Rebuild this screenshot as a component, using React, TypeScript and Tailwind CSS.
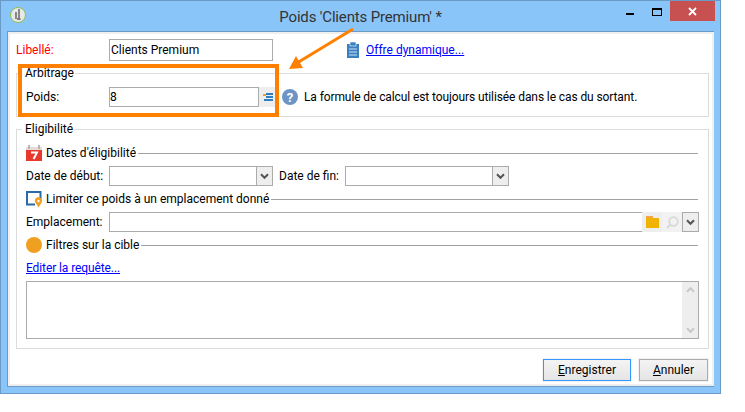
import React from "react";

const Chevron = ({ color = "#555" }: { color?: string }) => (
  <svg width="9" height="7" viewBox="0 0 9 7">
    <path d="M1 1.2 L4.5 4.8 L8 1.2" fill="none" stroke={color} strokeWidth="2" />
  </svg>
);

const SelectBox = ({ width }: { width: string }) => (
  <div className={`flex h-[20px] border border-[#ababab] bg-white box-border ${width}`}>
    <div className="flex-1" />
    <div className="flex w-[16px] items-center justify-center border-l border-[#ababab] bg-[#eeeeee]">
      <Chevron />
    </div>
  </div>
);

const SectionRow = ({ icon, text }: { icon: React.ReactNode; text: string }) => (
  <div className="flex h-[16px] items-center">
    <div className="flex w-[20px] shrink-0">{icon}</div>
    <span className="whitespace-nowrap leading-[14px]">{text}</span>
    <div className="ml-[2px] mr-px h-0 flex-1 border-t border-[#a0a0a0]" />
  </div>
);

const Calendar = () => (
  <svg width="16" height="16" viewBox="0 0 16 16">
    <rect x="0" y="3" width="16" height="13" fill="#e8392c" />
    <rect x="0" y="2" width="16" height="3" fill="#e4dcd8" />
    <rect x="2" y="0" width="2" height="4" fill="#bcb4b0" />
    <rect x="12" y="0" width="2" height="4" fill="#bcb4b0" />
    <path d="M5 7.5 H11 L7.6 14" fill="none" stroke="#ffffff" strokeWidth="2" />
  </svg>
);

const Location = () => (
  <svg width="16" height="17" viewBox="0 0 16 17">
    <path d="M9 13.5 H1 V1 H14.5 V8" fill="none" stroke="#2a6aa8" strokeWidth="2" />
    <path d="M12.5 16.5 L9.4 11.5 A3.6 3.6 0 1 1 15.6 11.5 Z" fill="#f0a020" />
    <circle cx="12.5" cy="10" r="1.2" fill="#ffffff" />
  </svg>
);

const Clipboard = () => (
  <svg width="12" height="16" viewBox="0 0 12 16">
    <rect x="0" y="2" width="12" height="14" fill="#3a80c0" />
    <rect x="3" y="0" width="6" height="4" fill="#3a80c0" stroke="#ffffff" strokeWidth="0.6" />
    <path d="M2 7 H10 M2 10 H10 M2 13 H10" stroke="#cfe2f3" strokeWidth="1.2" />
  </svg>
);

const FormulaIcon = () => (
  <svg width="10" height="8" viewBox="0 0 10 8">
    <rect x="0" y="1" width="3" height="2" fill="#f39c1f" />
    <rect x="3" y="0" width="7" height="2" fill="#2e7fc1" />
    <rect x="3" y="3" width="7" height="2" fill="#2e7fc1" />
    <rect x="1" y="6" width="9" height="2" fill="#2e7fc1" />
  </svg>
);

export default function App() {
  return (
    <div
      className="relative h-[412px] w-[745px] overflow-hidden bg-white text-[12px] text-black"
      style={{ fontFamily: 'Roboto, "Noto Sans", sans-serif' }}
    >
      <div className="flex h-[394px] w-[721px] flex-col border border-[#6a9ac8] bg-[#8ac5fa] box-border">
        <div className="grid h-[30px] shrink-0 grid-cols-[1fr_auto_1fr] items-start">
          <div className="ml-[9px] mt-[6px] flex h-[16px] w-[16px] items-center justify-center rounded-full border border-[#8fbf50] bg-[#e8e8e8]">
            <svg width="8" height="12" viewBox="0 0 8 12">
              <path d="M5 0 V9 M2 3 V10 M6.5 10 H3" stroke="#555" strokeWidth="1.3" fill="none" />
            </svg>
          </div>
          <div className="mt-[6px] whitespace-nowrap text-center text-[15px] leading-[20px] tracking-[-0.16px] text-[#333333]">
            Poids 'Clients Premium' *
          </div>
          <div className="mr-[5px] flex items-start justify-end">
            <div className="mr-[18px] mt-[12px] h-[2px] w-[8px] bg-black" />
            <div className="mr-[8px] mt-[7px] h-[8px] w-[10px] border border-t-2 border-black" />
            <div className="flex h-[20px] w-[45px] items-center justify-center bg-[#c75050]">
              <svg width="9" height="9" viewBox="0 0 9 9">
                <path d="M1 1 L8 8 M8 1 L1 8" stroke="#ffffff" strokeWidth="1.8" />
              </svg>
            </div>
          </div>
        </div>

        <div className="mx-[6px] flex h-[356px] flex-col border-b border-l border-t border-[#6a9ac8] bg-white shadow-[inset_0_0_0_2px_#efefef] box-border">
          <div className="flex flex-col px-[8px] pt-[7px]">
            <div className="flex h-[22px] items-center">
              <span className="w-[93px] text-[#ff0000]">Libellé:</span>
              <div className="flex h-[22px] w-[164px] items-center border border-[#ababab] px-px box-border">
                Clients Premium
              </div>
              <div className="ml-[74px] flex items-center">
                <Clipboard />
                <a className="ml-[7px] text-[#0000ff] underline">Offre dynamique...</a>
              </div>
            </div>

            <fieldset className="mt-[5px] w-[693px] border border-[#dcdcdc] px-[9px] pb-[9px] box-border">
              <legend className="ml-[-4px] pl-[3px] pr-px leading-[14px]">Arbitrage</legend>
              <div className="mt-[7px] flex h-[20px] items-center">
                <span className="w-[83px]">Poids:</span>
                <div className="flex h-[20px] w-[150px] items-center border border-[#ababab] box-border">8</div>
                <div className="flex h-[20px] w-[17px] items-center justify-center bg-[#eeeeee]">
                  <FormulaIcon />
                </div>
                <div className="ml-[6px] flex h-[16px] w-[16px] items-center justify-center rounded-full bg-[#6d94c4] text-[13px] font-bold leading-none text-white">
                  ?
                </div>
                <span className="ml-[6px] whitespace-nowrap tracking-[-0.1px]">
                  La formule de calcul est toujours utilisée dans le cas du sortant.
                </span>
              </div>
            </fieldset>

            <fieldset className="mt-[5px] w-[693px] border border-[#dcdcdc] px-[9px] pb-[9px] box-border">
              <legend className="ml-[-4px] pl-[3px] pr-px leading-[14px]">Eligibilité</legend>
              <div className="mt-[9px]">
                <SectionRow icon={<Calendar />} text="Dates d'éligibilité" />
              </div>
              <div className="mt-[5px] flex h-[20px] items-center">
                <span className="w-[83px] whitespace-nowrap">Date de début:</span>
                <SelectBox width="w-[164px]" />
                <span className="ml-[6px] w-[66px] whitespace-nowrap">Date de fin:</span>
                <SelectBox width="w-[164px]" />
              </div>
              <div className="mt-[5px]">
                <SectionRow icon={<Location />} text="Limiter ce poids à un emplacement donné" />
              </div>
              <div className="mt-[5px] flex h-[20px] items-center">
                <span className="w-[83px]">Emplacement:</span>
                <div className="h-[20px] flex-1 border border-r-0 border-[#ababab]" />
                <div className="flex h-[20px] w-[20px] items-center justify-center bg-[#eeeeee]">
                  <svg width="13" height="12" viewBox="0 0 13 12">
                    <rect x="0" y="0" width="7" height="3" fill="#f3a64a" />
                    <rect x="0" y="2" width="13" height="10" fill="#f0b400" />
                  </svg>
                </div>
                <div className="flex h-[20px] w-[20px] items-center justify-center bg-[#f2f2f2]">
                  <svg width="13" height="13" viewBox="0 0 13 13">
                    <circle cx="7.5" cy="5.5" r="4.3" fill="none" stroke="#d8d8d8" strokeWidth="1.8" />
                    <path d="M4.5 8.5 L1 12" stroke="#d8d8d8" strokeWidth="2" />
                  </svg>
                </div>
                <div className="flex h-[20px] w-[17px] items-center justify-center border border-[#ababab] bg-[#eeeeee] box-border">
                  <Chevron />
                </div>
              </div>
              <div className="mt-[5px]">
                <SectionRow
                  icon={<div className="h-[16px] w-[16px] rounded-full bg-[#f0a020]" />}
                  text="Filtres sur la cible"
                />
              </div>
              <div className="mt-[8px] h-[14px] leading-[14px]">
                <a className="tracking-[-0.1px] text-[#0000ff] underline">Editer la requête...</a>
              </div>
              <div className="mt-[6px] flex h-[58px] justify-end border border-[#ababab] box-border">
                <div className="flex w-[16px] flex-col items-center justify-between bg-[#eeeeee] py-[4px]">
                  <div className="rotate-180">
                    <Chevron color="#c8c8c8" />
                  </div>
                  <Chevron color="#c8c8c8" />
                </div>
              </div>
            </fieldset>

            <div className="mt-[10px] flex h-[22px] w-[693px] justify-end gap-[8px] pr-px">
              <button className="h-[22px] w-[88px] border border-[#3399ff] bg-gradient-to-b from-[#f4f4f4] to-[#e5e5e5] leading-[18px] shadow-[0_0_0_1px_#f2f2f2] box-border">
                <u>E</u>nregistrer
              </button>
              <button className="h-[22px] w-[69px] border border-[#acacac] bg-gradient-to-b from-[#f4f4f4] to-[#e5e5e5] leading-[18px] shadow-[0_0_0_1px_#f2f2f2] box-border">
                <u>A</u>nnuler
              </button>
            </div>
          </div>
        </div>
      </div>

      <div className="absolute left-[18px] top-[64px] h-[53px] w-[261px] border-[4px] border-[#ff8000] box-border" />
      <svg className="absolute left-[285px] top-[25px]" width="75" height="50" viewBox="0 0 75 50">
        <path d="M68 4 L12 38" stroke="#ff8000" strokeWidth="3" fill="none" />
        <path d="M4 44 L18 43 L11 31 Z" fill="#ff8000" />
      </svg>
    </div>
  );
}
